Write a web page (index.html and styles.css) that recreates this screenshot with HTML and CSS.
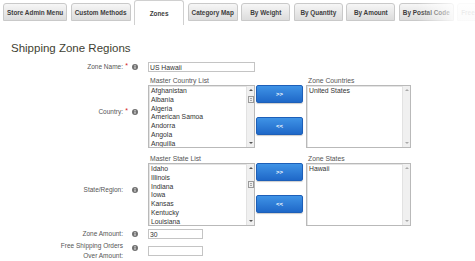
FILE: index.html
```html
<!DOCTYPE html>
<html lang="en">
<head>
  <meta charset="UTF-8">
  <meta name="viewport" content="width=device-width, initial-scale=1.0">
  <title>Shipping Zone Regions</title>
  <link rel="stylesheet" href="styles.css">
</head>
<body>
  <div class="tabs">
    <div class="tab">Store Admin Menu</div>
    <div class="tab">Custom Methods</div>
    <div class="tab active">Zones</div>
    <div class="tab">Category Map</div>
    <div class="tab">By Weight</div>
    <div class="tab">By Quantity</div>
    <div class="tab">By Amount</div>
    <div class="tab">By Postal Code</div>
    <div class="tab">Free Shipping</div>
    <div class="tabs-fade"></div>
  </div>

  <h1 class="title">Shipping Zone Regions</h1>

  <div class="form">
    <div class="row">
      <div class="label">Zone Name:</div>
      <div class="marks">
        <span class="req">*</span>
        <svg class="info" viewBox="0 0 6 6"><circle cx="3" cy="3" r="3"/><circle class="dot" cx="3" cy="1.5" r="0.55"/><rect class="dot" x="2.55" y="2.4" width="0.9" height="2.4"/></svg>
      </div>
      <input class="text name" value="US Hawaii">
    </div>

    <div class="row picker-row">
      <div class="label">Country:</div>
      <div class="marks">
        <span class="req">*</span>
        <svg class="info" viewBox="0 0 6 6"><circle cx="3" cy="3" r="3"/><circle class="dot" cx="3" cy="1.5" r="0.55"/><rect class="dot" x="2.55" y="2.4" width="0.9" height="2.4"/></svg>
      </div>
      <div class="picker">
        <div class="col master">
          <div class="sub">Master Country List</div>
          <div class="listbox">
            <ul class="items">
              <li>Afghanistan</li>
              <li>Albania</li>
              <li>Algeria</li>
              <li>American Samoa</li>
              <li>Andorra</li>
              <li>Angola</li>
              <li>Anguilla</li>
            </ul>
            <div class="scroll">
              <span class="arrow up"></span>
              <span class="thumb country"></span>
              <span class="arrow down"></span>
            </div>
          </div>
        </div>
        <div class="moves">
          <button class="move">&gt;&gt;</button>
          <button class="move">&lt;&lt;</button>
        </div>
        <div class="col chosen">
          <div class="sub">Zone Countries</div>
          <div class="listbox">
            <ul class="items">
              <li>United States</li>
            </ul>
            <div class="scroll off">
              <span class="arrow up"></span>
              <span class="arrow down"></span>
            </div>
          </div>
        </div>
      </div>
    </div>

    <div class="row picker-row states">
      <div class="label">State/Region:</div>
      <div class="marks">
        <span class="req"></span>
        <svg class="info" viewBox="0 0 6 6"><circle cx="3" cy="3" r="3"/><circle class="dot" cx="3" cy="1.5" r="0.55"/><rect class="dot" x="2.55" y="2.4" width="0.9" height="2.4"/></svg>
      </div>
      <div class="picker">
        <div class="col master">
          <div class="sub">Master State List</div>
          <div class="listbox">
            <ul class="items">
              <li>Idaho</li>
              <li>Illinois</li>
              <li>Indiana</li>
              <li>Iowa</li>
              <li>Kansas</li>
              <li>Kentucky</li>
              <li>Louisiana</li>
            </ul>
            <div class="scroll">
              <span class="arrow up"></span>
              <span class="thumb state"></span>
              <span class="arrow down"></span>
            </div>
          </div>
        </div>
        <div class="moves">
          <button class="move">&gt;&gt;</button>
          <button class="move">&lt;&lt;</button>
        </div>
        <div class="col chosen">
          <div class="sub">Zone States</div>
          <div class="listbox">
            <ul class="items">
              <li>Hawaii</li>
            </ul>
            <div class="scroll off">
              <span class="arrow up"></span>
              <span class="arrow down"></span>
            </div>
          </div>
        </div>
      </div>
    </div>

    <div class="row amount">
      <div class="label">Zone Amount:</div>
      <div class="marks">
        <span class="req"></span>
        <svg class="info" viewBox="0 0 6 6"><circle cx="3" cy="3" r="3"/><circle class="dot" cx="3" cy="1.5" r="0.55"/><rect class="dot" x="2.55" y="2.4" width="0.9" height="2.4"/></svg>
      </div>
      <input class="text short" value="30">
    </div>

    <div class="row free">
      <div class="label">Free Shipping Orders<br>Over Amount:</div>
      <div class="marks top">
        <span class="req"></span>
        <svg class="info" viewBox="0 0 6 6"><circle cx="3" cy="3" r="3"/><circle class="dot" cx="3" cy="1.5" r="0.55"/><rect class="dot" x="2.55" y="2.4" width="0.9" height="2.4"/></svg>
      </div>
      <input class="text short" value="">
    </div>
  </div>
</body>
</html>
```

FILE: styles.css
```css
* {
  margin: 0;
  padding: 0;
  box-sizing: border-box;
}
body {
  width: 475px;
  height: 261px;
  overflow: hidden;
  background: #fff;
  font-family: "Liberation Sans", Arial, sans-serif;
  color: #444;
}

/* tabs */
.tabs {
  position: relative;
  display: flex;
  align-items: flex-start;
  gap: 3.5px;
  height: 25px;
  padding: 3px 0 0 3px;
  overflow: hidden;
  white-space: nowrap;
}
.tab {
  flex: none;
  display: flex;
  align-items: center;
  justify-content: center;
  min-width: 49px;
  height: 18px;
  padding: 0 3px;
  font-size: 6.4px;
  font-weight: bold;
  color: #3d3d3d;
  background: linear-gradient(#f6f6f6, #dcdcdc);
  border: 1px solid #c9c9c9;
  border-radius: 3px 3px 0 0;
}
.tab.active {
  min-width: 50px;
  height: 25px;
  margin-top: -3px;
  background: #fff;
  border-color: #d0d0d0;
  border-bottom: none;
}
.tabs-fade {
  position: absolute;
  top: 0;
  right: 0;
  width: 58px;
  height: 25px;
  background: linear-gradient(to right, rgba(255, 255, 255, 0), rgba(255, 255, 255, 0.9) 70%);
}

.title {
  margin: 16px 0 0 11px;
  font-size: 11.5px;
  font-weight: normal;
  line-height: 14px;
  color: #3f3f33;
}

/* form */
.form {
  margin-top: 7px;
  font-size: 6.8px;
}
.row {
  display: flex;
  align-items: center;
}
.label {
  width: 123px;
  text-align: right;
  font-size: 6.5px;
  line-height: 10px;
  color: #555;
}
.marks {
  width: 25px;
  display: flex;
  align-items: center;
}
.req {
  width: 7px;
  height: 10px;
  text-align: center;
  color: #d42020;
  font-size: 7px;
  line-height: 7px;
}
.info {
  width: 6px;
  height: 6px;
  margin-left: 2px;
  fill: #707070;
}
.info .dot {
  fill: #fff;
}
.marks.top {
  align-self: flex-start;
  margin-top: 2px;
}

.text {
  height: 10px;
  padding: 0 1px;
  border: 1px solid #c4c4c4;
  font-family: inherit;
  font-size: 6.8px;
  color: #333;
  background: #fff;
  outline: none;
}
.text.name {
  width: 107px;
}
.text.short {
  width: 55px;
}

/* dual list pickers */
.picker-row {
  margin-top: 4px;
}
.picker-row.states {
  margin-top: 6px;
}
.picker {
  display: flex;
}
.col.master {
  width: 107px;
}
.col.chosen {
  width: 105px;
  margin-left: 3px;
}
.sub {
  height: 9px;
  line-height: 9px;
  padding-left: 2px;
  color: #555;
}
.listbox {
  display: flex;
  height: 63px;
  border: 1px solid #b9b9b9;
  box-shadow: inset 1px 1px 0 #e4e4e4;
  background: #fff;
  overflow: hidden;
}
.items {
  flex: 1;
  list-style: none;
  padding: 1px 0 0 2px;
  color: #333;
  line-height: 8.8px;
}
.scroll {
  flex: none;
  width: 8px;
  display: flex;
  flex-direction: column;
  align-items: center;
  padding: 3px 0;
  background: #f0f0f0;
  border-left: 1px solid #e2e2e2;
}
.arrow {
  width: 0;
  height: 0;
  border-left: 2px solid transparent;
  border-right: 2px solid transparent;
}
.arrow.up {
  border-bottom: 2px solid #555;
}
.arrow.down {
  margin-top: auto;
  border-top: 2px solid #555;
}
.scroll.off .arrow.up {
  border-bottom-color: #aaa;
}
.scroll.off .arrow.down {
  border-top-color: #aaa;
}
.thumb {
  width: 6px;
  height: 7px;
  border: 1px solid #9a9a9a;
  background: repeating-linear-gradient(#e6e6e6 0 1px, #a8a8a8 1px 2px);
  background-clip: content-box;
  padding: 1px;
}
.thumb.country {
  margin-top: 5px;
}
.thumb.state {
  margin-top: 12px;
}

.moves {
  display: flex;
  flex-direction: column;
  padding-top: 9px;
  margin-left: 1px;
}
.move {
  width: 47px;
  height: 18px;
  border: 1px solid #1d5fb8;
  border-radius: 2px;
  background: linear-gradient(#3f93e6, #1f68c8);
  box-shadow: 0 1px 1px rgba(0, 0, 0, 0.2);
  color: #fff;
  font-family: inherit;
  font-size: 6px;
  font-weight: bold;
}
.move + .move {
  margin-top: 14px;
}

.amount {
  margin-top: 3px;
}
.free {
  margin-top: 2px;
}
```
